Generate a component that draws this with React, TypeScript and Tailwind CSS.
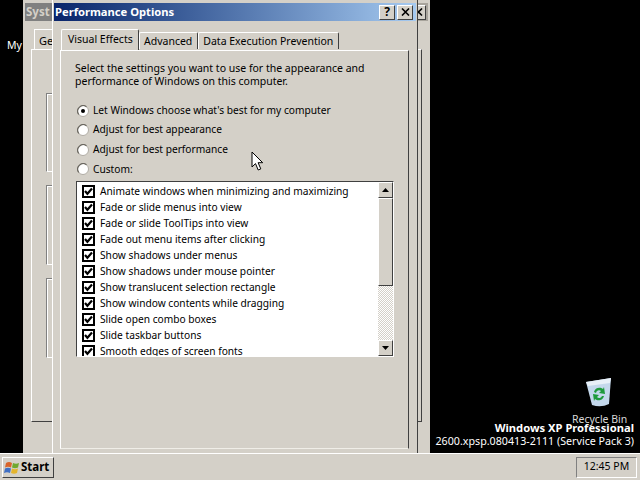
import React from 'react';

const OPTIONS = [
  'Animate windows when minimizing and maximizing',
  'Fade or slide menus into view',
  'Fade or slide ToolTips into view',
  'Fade out menu items after clicking',
  'Show shadows under menus',
  'Show shadows under mouse pointer',
  'Show translucent selection rectangle',
  'Show window contents while dragging',
  'Slide open combo boxes',
  'Slide taskbar buttons',
  'Smooth edges of screen fonts',
];

const RADIOS = [
  { label: "Let Windows choose what's best for my computer", on: true },
  { label: 'Adjust for best appearance', on: false },
  { label: 'Adjust for best performance', on: false },
  { label: 'Custom:', on: false },
];

const raised = 'border border-t-white border-l-white border-r-[#404040] border-b-[#404040] bg-[#d4d0c8]';

function Radio({ on }: { on: boolean }) {
  return (
    <svg width="12" height="12" viewBox="0 0 12 12" className="shrink-0">
      <circle cx="6" cy="6" r="5.5" fill="#fff" stroke="#b0aca4" />
      <path d="M1.8 9.5A5.5 5.5 0 0 1 9.5 1.8" fill="none" stroke="#6a6760" strokeWidth="1.2" />
      {on && <circle cx="6" cy="6" r="2" fill="#000" />}
    </svg>
  );
}

function Check() {
  return (
    <svg width="13" height="13" viewBox="0 0 13 13" className="shrink-0">
      <rect x="1" y="1" width="11" height="11" fill="#fff" stroke="#000" strokeWidth="2" />
      <path d="M3 6 5.400 8.800 10 3.500" fill="none" stroke="#000" strokeWidth="2.200" />
    </svg>
  );
}

function Tab({ label, active }: { label: string; active?: boolean }) {
  return (
    <div
      className={
        active
          ? 'relative z-10 h-[21px] w-[78px] -mb-px pl-[6px] pt-[2px] whitespace-nowrap rounded-t-[2px] border-t border-l border-r border-t-white border-l-white border-r-[#404040] bg-[#d4d0c8]'
          : 'mt-[3px] h-[17px] pl-[4px] pr-[5px] pt-[1px] whitespace-nowrap rounded-t-[2px] border-t border-l border-r border-t-white border-l-white border-r-[#404040] bg-[#d4d0c8]'
      }
    >
      {label}
    </div>
  );
}

function ScrollButton({ up }: { up?: boolean }) {
  return (
    <div className={`${raised} h-4 flex items-center justify-center`}>
      <svg width="7" height="4" viewBox="0 0 7 4">
        <path d={up ? 'M3.5 0 7 4H0z' : 'M0 0h7L3.5 4z'} fill="#000" />
      </svg>
    </div>
  );
}

function CloseButton() {
  return (
    <div className={`${raised} w-[16px] h-[15px] flex items-center justify-center shrink-0`}>
      <svg width="9" height="8" viewBox="0 0 9 8">
        <path d="M1 0.5 8 7.500M8 0.5 1 7.500" stroke="#000" strokeWidth="1.6" />
      </svg>
    </div>
  );
}

function GroupEdge({ height }: { height: string }) {
  return <div className={`${height} w-[6px] border-l border-t border-b border-l-[#808080] border-t-[#808080] border-b-white shadow-[inset_1px_1px_0_#fff]`} />;
}

function BackWindow() {
  return (
    <div className="absolute left-[23px] top-0 w-[407px] h-[453px] bg-[#d4d0c8] pt-[3px] px-[2px] text-[10.5px]">
      <div className="h-[18px] flex items-center justify-between bg-[#a8a49c] font-bold text-[11.5px] pr-[2px]">
        <span className="w-[29px] h-full bg-[#808080] text-[#d4d0c8] leading-[18px] pl-[1px]">Syst</span>
        <CloseButton />
      </div>
      <div className="ml-[9px] mt-[8px] h-[20px] w-[40px] pl-[4px] pt-[3px] border-t border-l border-t-white border-l-white text-[11px]">Ge</div>
      <div className="relative ml-[6px] h-[373px] w-[391px] border border-t-white border-l-white border-r-[#404040] border-b-[#404040] pl-[14px] pt-[43px]">
        <div className="flex flex-col gap-[13px]">
          <GroupEdge height="h-[79px]" />
          <GroupEdge height="h-[80px]" />
          <GroupEdge height="h-[80px]" />
        </div>
      </div>
    </div>
  );
}

function PerformanceDialog() {
  return (
    <div className="absolute left-[52px] top-0 w-[366px] h-[453px] bg-[#d4d0c8] border-l border-l-white border-r border-r-[#404040] pt-[3px] px-[1px] text-[10.5px] text-black">
      <div className="h-[18px] flex items-center bg-gradient-to-r from-[#0a246a] to-[#a6caf0] pl-[1px] pr-[3px] gap-[2px]">
        <span className="flex-1 font-bold text-[11.2px] text-white pt-[1px]">Performance Options</span>
        <div className={`${raised} w-[16px] h-[15px] flex items-center justify-center font-bold text-[12px] leading-none`}>?</div>
        <CloseButton />
      </div>
      <div className="ml-[7px] mt-[8px] flex h-[21px]">
        <Tab label="Visual Effects" active />
        <Tab label="Advanced" />
        <Tab label="Data Execution Prevention" />
      </div>
      <div className="ml-[6px] h-[399px] w-[349px] border border-t-white border-l-white border-r-[#404040] border-b-[#f0eee8] pl-[14px] pt-[11px]">
        <p className="leading-[13px] w-[300px]">
          Select the settings you want to use for the appearance and performance of Windows on this computer.
        </p>
        <div className="mt-[16px] ml-[2px] flex flex-col gap-[6.6px] text-[10.2px]">
          {RADIOS.map((r) => (
            <div key={r.label} className="h-[13px] flex items-center gap-[4px]">
              <Radio on={r.on} />
              <span>{r.label}</span>
            </div>
          ))}
        </div>
        <div className="mt-[5px] ml-[1px] h-[176px] w-[318px] flex border border-t-[#404040] border-l-[#404040] border-r-white border-b-white bg-white">
          <div className="flex-1 overflow-hidden pl-[5px] pt-[2px] text-[10.2px]">
            {OPTIONS.map((o) => (
              <div key={o} className="h-4 flex items-center gap-[5px]">
                <Check />
                <span>{o}</span>
              </div>
            ))}
          </div>
          <div className="w-[15px] flex flex-col bg-[repeating-conic-gradient(#d4d0c8_0_25%,#fff_0_50%)] bg-[length:2px_2px]">
            <ScrollButton up />
            <div className={`${raised} h-[88px]`} />
            <div className="flex-1" />
            <ScrollButton />
          </div>
        </div>
      </div>
    </div>
  );
}

export default function App() {
  return (
    <div className="relative w-[640px] h-[480px] overflow-hidden bg-black font-['Noto_Sans',sans-serif]">
      <div className="absolute left-[7px] top-[38px] text-white text-[10.5px]">My</div>

      <BackWindow />
      <PerformanceDialog />

      {/* mouse pointer */}
      <svg className="absolute left-[251px] top-[151px]" width="13" height="21" viewBox="0 0 13 21">
        <path d="M1 1v15l3.500-3.400 2.700 6.400 2.600-1.100-2.700-6.200h4.600z" fill="#fff" stroke="#000" />
      </svg>

      {/* recycle bin */}
      <svg className="absolute left-[584px] top-[376px]" width="30" height="32" viewBox="0 0 30 32">
        <path d="M2 6 27 2l-2 26q-8 4-17 1z" fill="#c4d8ec" />
        <path d="M2 6 27 2l-1 5-22 3z" fill="#e8f0f8" />
        <path d="M10 16a5.500 5.500 0 0 1 9-3l1-2 1 7-6-1 2-2a3 3 0 0 0-5 2zM20 20a5.500 5.500 0 0 1-9 3l-1 2-1-7 6 1-2 2a3 3 0 0 0 5-1z" fill="#1e9a3c" />
      </svg>
      <div className="absolute left-[572px] top-[412px] text-[10.5px] text-[#d8d8d8] whitespace-nowrap">Recycle Bin</div>
      <div className="absolute right-[6px] top-[421px] text-right text-white text-[10.7px] leading-[13px] whitespace-nowrap">
        <div className="font-bold text-[11.2px]">Windows XP Professional</div>
        <div className="mt-[1px]">2600.xpsp.080413-2111 (Service Pack 3)</div>
      </div>

      {/* taskbar */}
      <div className="absolute left-0 right-0 top-[453px] h-[27px] bg-[#d4d0c8] border-t border-t-white flex items-center justify-between pl-[2px] pr-[3px]">
        <div className="h-[21px] w-[52px] flex items-center gap-0 pl-[1px] font-bold text-[11.5px] border border-t-white border-l-white border-r-[#404040] border-b-[#404040]">
          <svg width="17" height="15" viewBox="0 0 17 15" className="shrink-0">
            <path d="M2 3q3-2 6 0l-1 4.500q-3-1.500-6 0z" fill="#d9642a" />
            <path d="M9 3q3 1.500 6 0l-1 4.500q-3 1.500-6 0z" fill="#6fa82e" />
            <path d="M1 8.500q3-1.500 6 0l-1 4.500q-3-1.500-6 0z" fill="#3f6fc4" />
            <path d="M8 8.500q3 1.500 6 0l-1 4.500q-3 1.500-6 0z" fill="#e5b52d" />
          </svg>
          <span>Start</span>
        </div>
        <div className="h-[21px] w-[61px] flex items-center justify-center text-[10.5px] border border-t-[#808080] border-l-[#808080] border-r-white border-b-white">
          12:45 PM
        </div>
      </div>
    </div>
  );
}
